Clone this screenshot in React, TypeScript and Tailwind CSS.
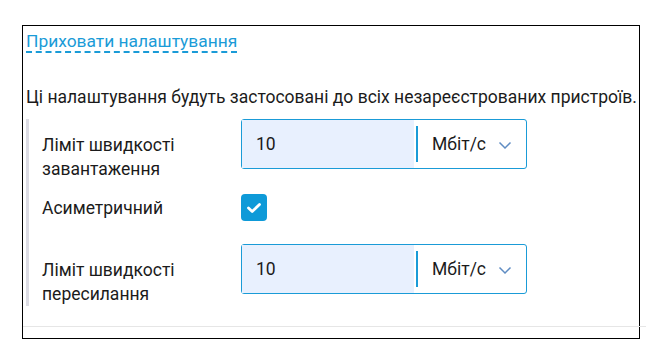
import React from 'react';

function Chevron() {
  return (
    <svg width="14" height="9" viewBox="0 0 14 9" fill="none" className="ml-[12px] mt-[3px]">
      <path d="M1.5 1.5 L7 7 L12.5 1.5" stroke="#5f8cc2" strokeWidth="1.5" />
    </svg>
  );
}

function SpeedInput({ value }: { value: string }) {
  return (
    <div className="flex h-[50px] w-[286px] items-stretch rounded-[3px] border border-[#1a9bd7] bg-white">
      <div className="flex w-[172px] items-center bg-[#e8f0fe] pl-[14px] text-[17.5px] text-[#1b1b1b]">{value}</div>
      <div className="flex flex-1 items-center">
        <div className="ml-[2px] h-[36px] w-[2px] bg-[#1a9bd7]" />
        <span className="ml-[14px] text-[17.5px] text-[#1b1b1b]">Мбіт/с</span>
        <Chevron />
      </div>
    </div>
  );
}

export default function App() {
  return (
    <div className="min-h-screen bg-white pl-[22px] pt-[25px]" style={{ fontFamily: 'Roboto, "Noto Sans", sans-serif' }}>
      <div className="h-[314px] w-[618px] border border-black">
        <div className="w-[623px] border-b border-[#e6e6e6] pb-[20px] pl-[3px]">
          <div className="pt-[5px] leading-[20px]">
            <a className="border-b-2 border-dashed border-[#1a9bd7] text-[17.4px] text-[#1a9bd7]">Приховати налаштування</a>
          </div>
          <p className="mt-[34px] text-[17.5px] leading-[22px] text-[#1b1b1b]">
            Ці налаштування будуть застосовані до всіх незареєстрованих пристроїв.
          </p>
          <div className="mt-[11px] border-l-[3px] border-[#dcdce4] pl-[13px] text-[17.5px] text-[#1b1b1b]">
            <div className="flex items-start">
              <div className="w-[199px] pt-[14px] leading-[24px]">
                Ліміт швидкості
                <br />
                завантаження
              </div>
              <SpeedInput value="10" />
            </div>
            <div className="mt-[13px] flex items-center">
              <div className="w-[199px] leading-[24px]">Асиметричний</div>
              <div className="flex h-[27px] w-[26px] items-center justify-center rounded-[4px] bg-[#0e9ad8]">
                <svg width="16" height="12" viewBox="0 0 16 12" fill="none">
                  <path d="M2.5 6 L6.2 9.5 L13.5 2.5" stroke="white" strokeWidth="2.8" strokeLinecap="round" strokeLinejoin="round" />
                </svg>
              </div>
            </div>
            <div className="mt-[23px] flex items-start">
              <div className="w-[199px] pt-[14px] leading-[24px]">
                Ліміт швидкості
                <br />
                пересилання
              </div>
              <SpeedInput value="10" />
            </div>
          </div>
        </div>
      </div>
    </div>
  );
}
